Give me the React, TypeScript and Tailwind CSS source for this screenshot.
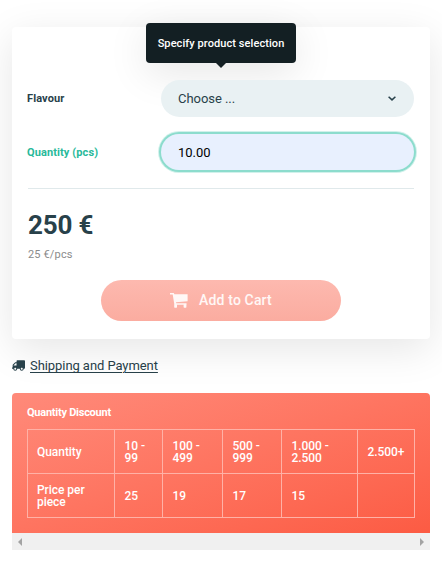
import { FaTruck } from 'react-icons/fa'

const tiers = [
  { range: '10 -\n99', price: '25', width: 'w-[48px]' },
  { range: '100 -\n499', price: '19', width: 'w-[60px]' },
  { range: '500 -\n999', price: '17', width: 'w-[59px]' },
  { range: '1.000 -\n2.500', price: '15', width: 'w-[76px]' },
  { range: '2.500+', price: '', width: 'w-[57px]' },
]

function CartIcon() {
  return (
    <svg className="h-[15px] w-[18px]" viewBox="0 0 18 15" fill="currentColor" aria-hidden="true">
      <path d="M0 0h3.8l.6 1.3H17.6v7L6 9.2l.2 1h10.3v1.6H4.4L2.7 1.5H0z" />
      <rect x="4.2" y="11.2" width="2.8" height="3.5" rx=".6" />
      <rect x="13.6" y="11.2" width="2.8" height="3.5" rx=".6" />
    </svg>
  )
}

function Tooltip() {
  return (
    <div className="absolute top-[-4px] left-[134px] flex h-10 w-[150px] items-center justify-center rounded-[4px] bg-[#131f23] pt-[2px] text-[11px] font-medium tracking-[0.08px] whitespace-nowrap text-white shadow-[0_10px_40px_rgba(0,0,0,0.1)]">
      Specify product selection
      <span className="absolute top-full left-[70px] h-0 w-0 border-x-[5px] border-t-[5px] border-x-transparent border-t-[#131f23]" />
    </div>
  )
}

function OrderCard() {
  return (
    <section className="relative h-[312px] rounded-[4px] bg-white px-[15px] pt-[53px] shadow-[0_10px_40px_rgba(0,0,0,0.1)]">
      <Tooltip />
      <div className="relative flex h-[37px] items-center">
        <label className="w-[134px] pt-px text-[11px] font-bold tracking-[0.1px]">Flavour</label>
        <button className="flex h-[37px] w-[253px] items-center justify-between rounded-full bg-[#e9f1f3] pr-[18px] pl-[17px] text-[13px] tracking-[-0.05px]">
          Choose ...
          <svg className="h-[5px] w-[8px]" viewBox="0 0 8 5" fill="none" stroke="currentColor" strokeWidth="1.5">
            <path d="M.6.8 4 3.9 7.4.8" />
          </svg>
        </button>
      </div>
      <div className="relative mt-[17px] flex h-[36px] items-center">
        <label className="w-[134px] pt-[2px] text-[11px] font-bold tracking-[0.1px] text-[#28b99a]">Quantity (pcs)</label>
        <input
          className="h-[36px] w-[253px] rounded-full bg-[#e8f0fe] px-[17px] text-[13px] text-black shadow-[0_0_0_2px_#8cdccd,0_0_0_3px_#d1f1eb] outline-none"
          defaultValue="10.00"
        />
      </div>
      <hr className="mt-[18px] mr-px ml-px border-[#e0e9eb]" />
      <p className="mt-[20px] ml-px text-[26px] leading-[32px] font-bold tracking-[-0.2px]">250 €</p>
      <p className="mt-[6px] ml-px text-[11px] leading-[16px] tracking-[0.15px] text-[#8b8b8b]">25 €/pcs</p>
      <button className="mt-[17px] ml-[74px] flex h-[41px] w-[240px] items-center justify-center gap-[11px] rounded-full bg-linear-to-b from-[#fdb9af] to-[#fbaca0] text-[14px] font-medium tracking-[0.15px] text-white/90">
        <CartIcon />
        Add to Cart
      </button>
    </section>
  )
}

function DiscountTable() {
  return (
    <section className="mt-[18px]">
      <div className="h-[140px] rounded-t-[4px] bg-linear-to-br from-[#ff8a7a] to-[#fc5b43] px-[15px] pt-[13px] text-white">
        <h2 className="text-[11px] leading-[14px] font-bold tracking-[-0.25px]">Quantity Discount</h2>
        <table className="mt-[9px] w-[388px] table-fixed border-collapse text-left text-[12px] leading-[12px] font-medium tracking-[-0.05px]">
          <tbody>
            <tr className="h-[44px]">
              <td className="w-[87px] border border-[#ffb1a6] px-[9px]">Quantity</td>
              {tiers.map((tier) => (
                <td key={tier.range} className={`${tier.width} border border-[#ffb1a6] pl-[9.5px] whitespace-pre`}>
                  {tier.range}
                </td>
              ))}
            </tr>
            <tr className="h-[44px]">
              <td className="border border-[#ffb1a6] px-[9px]">Price per piece</td>
              {tiers.map((tier) => (
                <td key={tier.range} className="border border-[#ffb1a6] pl-[9.5px]">
                  {tier.price}
                </td>
              ))}
            </tr>
          </tbody>
        </table>
      </div>
      <div className="flex h-[17px] items-center justify-between bg-[#f0f0f0] px-[6px]">
        <span className="border-y-[4px] border-r-[4px] border-y-transparent border-r-[#a3a3a3]" />
        <span className="border-y-[4px] border-l-[4px] border-y-transparent border-l-[#a3a3a3]" />
      </div>
    </section>
  )
}

export default function App() {
  return (
    <main className="h-[563px] w-[442px] overflow-hidden bg-white px-[12px] pt-[27px] font-[Roboto,sans-serif] text-[#28414a]">
      <OrderCard />
      <div className="mt-[18px] flex h-[18px] items-center gap-[5px] text-[13px] tracking-[-0.07px]">
        <FaTruck className="mb-px h-[13px] w-[13px] -scale-x-100" />
        <a href="#shipping" className="underline underline-offset-2">
          Shipping and Payment
        </a>
      </div>
      <DiscountTable />
    </main>
  )
}
